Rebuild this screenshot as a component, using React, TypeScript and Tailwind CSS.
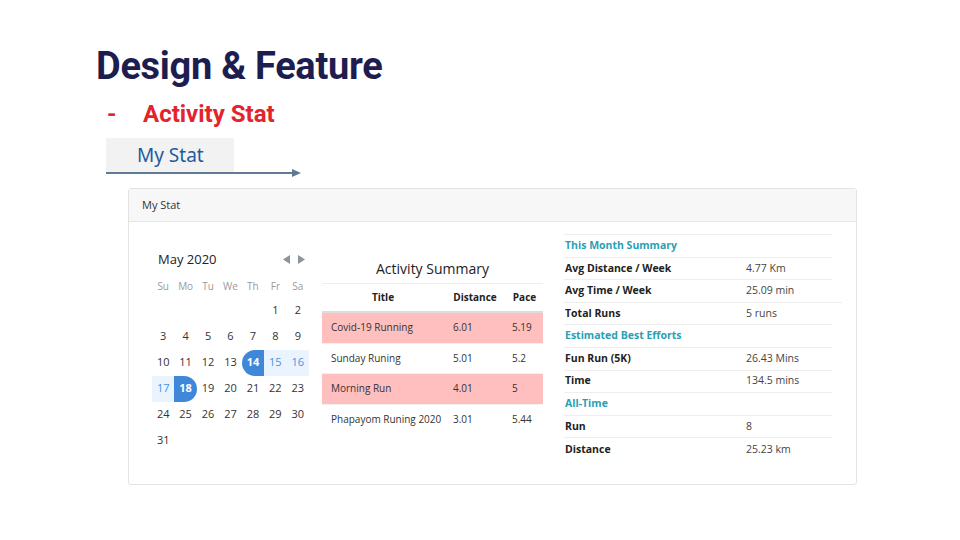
const weeks: (number | null)[][] = [
  [null, null, null, null, null, 1, 2],
  [3, 4, 5, 6, 7, 8, 9],
  [10, 11, 12, 13, 14, 15, 16],
  [17, 18, 19, 20, 21, 22, 23],
  [24, 25, 26, 27, 28, 29, 30],
  [31, null, null, null, null, null, null],
]

const activities = [
  { title: 'Covid-19 Running', distance: '6.01', pace: '5.19', hot: true },
  { title: 'Sunday Runing', distance: '5.01', pace: '5.2', hot: false },
  { title: 'Morning Run', distance: '4.01', pace: '5', hot: true },
  { title: 'Phapayom Runing 2020', distance: '3.01', pace: '5.44', hot: false },
]

type StatRow = { label: string; value?: string; section?: boolean; wide?: boolean }

const stats: StatRow[] = [
  { label: 'This Month Summary', section: true },
  { label: 'Avg Distance / Week', value: '4.77 Km' },
  { label: 'Avg Time / Week', value: '25.09 min', wide: true },
  { label: 'Total Runs', value: '5 runs' },
  { label: 'Estimated Best Efforts', section: true },
  { label: 'Fun Run (5K)', value: '26.43 Mins' },
  { label: 'Time', value: '134.5 mins' },
  { label: 'All-Time', section: true },
  { label: 'Run', value: '8' },
  { label: 'Distance', value: '25.23 km' },
]

function dayClass(d: number) {
  if (d === 14) return 'bg-[#3f87d9] text-white font-bold rounded-l-full'
  if (d === 18) return 'bg-[#3f87d9] text-white font-bold rounded-r-full'
  if (d === 15 || d === 16 || d === 17) return 'bg-[#eaf4fe] text-[#4a90e2]'
  return 'text-[#333]'
}

function Calendar() {
  return (
    <div className="w-[157px] pt-[28px]">
      <div className="flex items-center justify-between pl-[6px] pr-[4px]">
        <span className="text-[13px] text-[#222]">May 2020</span>
        <div className="flex items-center gap-[8px] text-[#8a9499]">
          <svg width="7" height="9" viewBox="0 0 7 9">
            <path d="M7 0 L0 4.5 L7 9 Z" fill="currentColor" />
          </svg>
          <svg width="7" height="9" viewBox="0 0 7 9">
            <path d="M0 0 L7 4.5 L0 9 Z" fill="currentColor" />
          </svg>
        </div>
      </div>
      <div className="grid grid-cols-7 mt-[9px] text-[10px] text-[#9a9a9a] text-center">
        {['Su', 'Mo', 'Tu', 'We', 'Th', 'Fr', 'Sa'].map((d) => (
          <span key={d}>{d}</span>
        ))}
      </div>
      <div className="mt-[4px]">
        {weeks.map((w, i) => (
          <div key={i} className="grid grid-cols-7 h-[26px] text-[11px] text-center">
            {w.map((d, j) =>
              d === null ? (
                <span key={j} />
              ) : (
                <span key={j} className={`flex items-center justify-center ${dayClass(d)}`}>
                  {d}
                </span>
              )
            )}
          </div>
        ))}
      </div>
    </div>
  )
}

function ActivityTable() {
  return (
    <div className="w-[221px] pt-[36px]">
      <div className="text-center text-[14px] text-[#222] pb-[4px] border-b border-[#eee]">
        Activity Summary
      </div>
      <div className="flex h-[29px] items-center text-[10px] font-bold text-[#222] border-b-2 border-[#ddd]">
        <span className="w-[122px] text-center">Title</span>
        <span className="w-[62px] text-center">Distance</span>
        <span className="flex-1 text-center">Pace</span>
      </div>
      {activities.map((a, i) => (
        <div
          key={a.title}
          className={`flex h-[30.5px] items-center text-[10px] text-[#333] ${i < activities.length - 1 ? 'border-b border-[#f0f0f0]' : ''} ${a.hot ? 'bg-[#ffbfbf]' : ''}`}
        >
          <span className="w-[131px] pl-[9px]">{a.title}</span>
          <span className="w-[59px]">{a.distance}</span>
          <span className="flex-1">{a.pace}</span>
        </div>
      ))}
    </div>
  )
}

function StatTable() {
  return (
    <div className="w-[278px] pt-[12px]">
      <div className="w-[268px] border-t border-[#eee]" />
      {stats.map((s, i) => (
        <div
          key={s.label}
          className={`flex h-[22.6px] items-center text-[10.5px] ${i < stats.length - 1 ? 'border-b border-[#eee]' : ''} ${s.wide ? 'w-[278px]' : 'w-[268px]'}`}
        >
          {s.section ? (
            <span className="pl-[1px] font-bold text-[#2a9fb4]">{s.label}</span>
          ) : (
            <>
              <span className="w-[182px] pl-[1px] font-bold text-[#222]">{s.label}</span>
              <span className="text-[#444]">{s.value}</span>
            </>
          )}
        </div>
      ))}
    </div>
  )
}

export default function App() {
  return (
    <div className="w-[960px] h-[540px] bg-white overflow-hidden relative">
      <div className="pl-[96px] pt-[42px]">
        <h1 className="text-[38px] leading-[48px] font-bold text-[#1e1d50] tracking-[-0.3px] font-['Roboto',sans-serif]">
          Design &amp; Feature
        </h1>
        <div className="flex items-center mt-[9px] pl-[11px] text-[24px] leading-[30px] font-bold text-[#e3242b] font-['Roboto',sans-serif]">
          <span className="w-[36px]">-</span>
          <span>Activity Stat</span>
        </div>
      </div>
      <div className="pl-[106px] mt-[9px]">
        <div className="w-[128px] h-[34px] bg-[#f2f2f2] flex items-center pl-[31px] text-[19px] text-[#1f5b9c] font-['Noto_Sans',sans-serif]">
          My Stat
        </div>
        <svg width="196" height="8" viewBox="0 0 196 8" className="block -mt-[3px]">
          <line x1="0" y1="4" x2="188" y2="4" stroke="#5d7a96" strokeWidth="2" />
          <path d="M186 0 L195 4 L186 8 Z" fill="#5d7a96" />
        </svg>
      </div>
      <div className="ml-[128px] mt-[11px] w-[729px] h-[297px] border border-[#e3e3e3] rounded-[3px] font-['Open_Sans',sans-serif]">
        <div className="h-[33px] bg-[#f7f7f7] border-b border-[#e6e6e6] flex items-center pl-[13px] text-[11px] text-[#333]">
          My Stat
        </div>
        <div className="flex pl-[23px]">
          <Calendar />
          <div className="ml-[13px]">
            <ActivityTable />
          </div>
          <div className="ml-[21px]">
            <StatTable />
          </div>
        </div>
      </div>
    </div>
  )
}
